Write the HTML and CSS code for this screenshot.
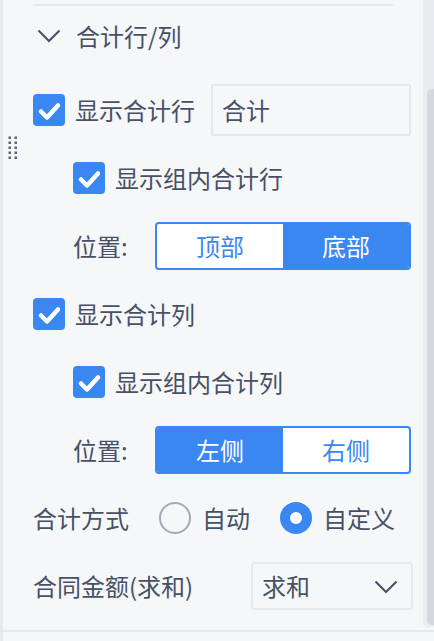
FILE: index.html
```html
<!DOCTYPE html>
<html lang="zh-CN">
<head>
<meta charset="utf-8">
<title>合计行/列</title>
<link rel="stylesheet" href="styles.css">
</head>
<body>
<div class="panel">
  <div class="edge"></div>
  <div class="content">
    <div class="divider"></div>
    <div class="section-head">
      <svg class="chev" viewBox="0 0 24 14" width="24" height="14"><path d="M1.5 1.5 L12 12 L22.5 1.5" fill="none" stroke="#465166" stroke-width="2"/></svg>
      <span>合计行/列</span>
    </div>

    <div class="row">
      <span class="check"><svg viewBox="0 0 32 32" width="32" height="32"><rect width="32" height="32" rx="4" fill="#3a87f2"/><path d="M8 17.5 L14 23.5 L25 11.5" fill="none" stroke="#fff" stroke-width="4.5" stroke-linecap="round" stroke-linejoin="round"/></svg></span>
      <span class="check-text">显示合计行</span>
      <div class="text-input">合计</div>
    </div>

    <div class="row indent">
      <span class="check"><svg viewBox="0 0 32 32" width="32" height="32"><rect width="32" height="32" rx="4" fill="#3a87f2"/><path d="M8 17.5 L14 23.5 L25 11.5" fill="none" stroke="#fff" stroke-width="4.5" stroke-linecap="round" stroke-linejoin="round"/></svg></span>
      <span class="check-text">显示组内合计行</span>
    </div>

    <div class="row indent">
      <span class="pos-label">位置:</span>
      <div class="seg">
        <span class="seg-item">顶部</span>
        <span class="seg-item active">底部</span>
      </div>
    </div>

    <div class="row">
      <span class="check"><svg viewBox="0 0 32 32" width="32" height="32"><rect width="32" height="32" rx="4" fill="#3a87f2"/><path d="M8 17.5 L14 23.5 L25 11.5" fill="none" stroke="#fff" stroke-width="4.5" stroke-linecap="round" stroke-linejoin="round"/></svg></span>
      <span class="check-text">显示合计列</span>
    </div>

    <div class="row indent">
      <span class="check"><svg viewBox="0 0 32 32" width="32" height="32"><rect width="32" height="32" rx="4" fill="#3a87f2"/><path d="M8 17.5 L14 23.5 L25 11.5" fill="none" stroke="#fff" stroke-width="4.5" stroke-linecap="round" stroke-linejoin="round"/></svg></span>
      <span class="check-text">显示组内合计列</span>
    </div>

    <div class="row indent">
      <span class="pos-label">位置:</span>
      <div class="seg">
        <span class="seg-item active">左侧</span>
        <span class="seg-item">右侧</span>
      </div>
    </div>

    <div class="row">
      <span class="mode-label">合计方式</span>
      <span class="radio"></span>
      <span class="radio-text">自动</span>
      <span class="radio checked"></span>
      <span class="radio-text">自定义</span>
    </div>

    <div class="row">
      <span class="field-label">合同金额(求和)</span>
      <div class="select">
        <span>求和</span>
        <svg viewBox="0 0 24 14" width="24" height="14"><path d="M1.5 1.5 L12 12 L22.5 1.5" fill="none" stroke="#465166" stroke-width="2"/></svg>
      </div>
    </div>
  </div>
  <div class="scroll"><div class="thumb"></div></div>
  <svg class="drag" viewBox="0 0 10 24" width="10" height="24">
    <g fill="#5a6478">
      <rect x="0.5" y="0.5" width="2.5" height="2.5"/><rect x="6.5" y="0.5" width="2.5" height="2.5"/>
      <rect x="0.5" y="5.5" width="2.5" height="2.5"/><rect x="6.5" y="5.5" width="2.5" height="2.5"/>
      <rect x="0.5" y="10.5" width="2.5" height="2.5"/><rect x="6.5" y="10.5" width="2.5" height="2.5"/>
      <rect x="0.5" y="15.5" width="2.5" height="2.5"/><rect x="6.5" y="15.5" width="2.5" height="2.5"/>
      <rect x="0.5" y="20.5" width="2.5" height="2.5"/><rect x="6.5" y="20.5" width="2.5" height="2.5"/>
    </g>
  </svg>
</div>
<div class="bottom-line"></div>
<div class="below">
  <div class="edge"></div>
</div>
</body>
</html>
```

FILE: styles.css
```css
html, body {
  margin: 0;
  padding: 0;
}
body {
  width: 434px;
  height: 641px;
  overflow: hidden;
  background: #f6f7f9;
  font-family: "Noto Sans CJK SC", "Noto Sans", sans-serif;
  font-size: 24px;
  line-height: 1;
  color: #465166;
}
.panel {
  position: relative;
  display: flex;
  width: 434px;
  height: 630px;
}
.edge {
  width: 3px;
  flex: none;
  background: #e8eaee;
}
.content {
  flex: none;
  width: 420px;
  box-sizing: border-box;
  padding: 4px 12px 0 30px;
  display: flex;
  flex-direction: column;
}
.divider {
  width: 360px;
  height: 2px;
  background: #e5e7eb;
}
.section-head {
  height: 60px;
  display: flex;
  align-items: center;
  margin-bottom: 10px;
}
.section-head .chev {
  margin-left: 4px;
  margin-right: 15px;
}
.row {
  height: 68px;
  display: flex;
  align-items: center;
}
.row.indent {
  padding-left: 40px;
}
.check {
  width: 32px;
  height: 32px;
  flex: none;
  display: block;
}
.check svg {
  display: block;
}
.check-text {
  margin-left: 10px;
  white-space: nowrap;
}
.text-input {
  margin-left: auto;
  width: 200px;
  height: 52px;
  flex: none;
  box-sizing: border-box;
  border: 2px solid #e5e7eb;
  border-radius: 2px;
  padding-left: 9px;
  display: flex;
  align-items: center;
}
.pos-label {
  white-space: nowrap;
}
.seg {
  margin-left: auto;
  width: 256px;
  height: 48px;
  flex: none;
  box-sizing: border-box;
  border: 2px solid #3a87f2;
  border-radius: 4px;
  display: flex;
  overflow: hidden;
  background: #fff;
}
.seg-item {
  flex: 1;
  display: flex;
  align-items: center;
  justify-content: center;
  color: #3a87f2;
}
.seg-item.active {
  background: #3a87f2;
  color: #fff;
}
.mode-label {
  width: 126px;
  flex: none;
  white-space: nowrap;
}
.radio {
  width: 32px;
  height: 32px;
  box-sizing: border-box;
  border-radius: 50%;
  border: 2px solid #a4a9b2;
  flex: none;
  display: flex;
  align-items: center;
  justify-content: center;
}
.radio.checked {
  border: none;
  background: #3a87f2;
}
.radio.checked::after {
  content: "";
  width: 12px;
  height: 12px;
  border-radius: 50%;
  background: #fff;
}
.radio-text {
  margin-left: 11px;
  margin-right: 30px;
  white-space: nowrap;
}
.field-label {
  white-space: nowrap;
}
.select {
  margin-left: auto;
  margin-right: -2px;
  width: 162px;
  height: 48px;
  flex: none;
  box-sizing: border-box;
  border: 2px solid #e6e8ec;
  border-radius: 4px;
  padding: 0 13px 0 9px;
  display: flex;
  align-items: center;
  justify-content: space-between;
}
.select svg {
  display: block;
  margin-top: 2px;
}
.scroll {
  width: 11px;
  flex: none;
  height: 627px;
  background: #eaecef;
  border-bottom-left-radius: 5px;
  display: flex;
  justify-content: flex-end;
}
.thumb {
  margin-top: 89px;
  width: 7px;
  height: 536px;
  background: #d6d8dd;
  border-radius: 5px 0 0 5px;
}
.drag {
  position: absolute;
  left: 8px;
  top: 136px;
}
.bottom-line {
  height: 2px;
  background: #e6e8ec;
}
.below {
  height: 9px;
  display: flex;
}
```
